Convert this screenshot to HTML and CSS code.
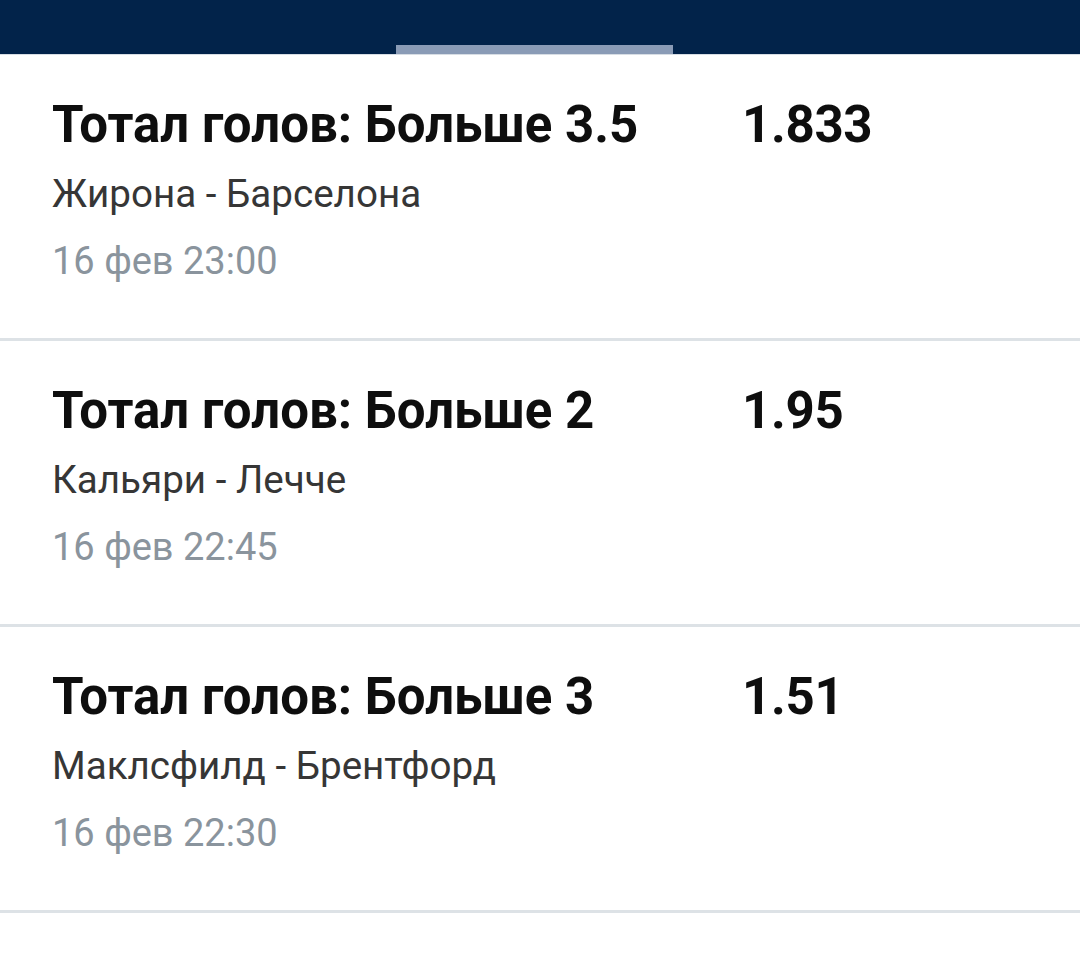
FILE: index.html
```html
<!DOCTYPE html>
<html lang="ru">
<head>
<meta charset="utf-8">
<link rel="stylesheet" href="styles.css">
</head>
<body>
<header class="topbar">
  <div class="tab-indicator"></div>
</header>
<main class="list">
  <div class="bet">
    <div class="bet-main">
      <div class="bet-title">Тотал голов: Больше 3.5</div>
      <div class="bet-match">Жирона - Барселона</div>
      <div class="bet-date">16 фев 23:00</div>
    </div>
    <div class="bet-odds">1.833</div>
  </div>
  <div class="bet">
    <div class="bet-main">
      <div class="bet-title">Тотал голов: Больше 2</div>
      <div class="bet-match">Кальяри - Лечче</div>
      <div class="bet-date">16 фев 22:45</div>
    </div>
    <div class="bet-odds">1.95</div>
  </div>
  <div class="bet">
    <div class="bet-main">
      <div class="bet-title">Тотал голов: Больше 3</div>
      <div class="bet-match">Маклсфилд - Брентфорд</div>
      <div class="bet-date">16 фев 22:30</div>
    </div>
    <div class="bet-odds">1.51</div>
  </div>
</main>
</body>
</html>
```

FILE: styles.css
```css
html, body {
  margin: 0;
  padding: 0;
  background: #ffffff;
  font-family: Roboto, "Noto Sans", sans-serif;
}

.topbar {
  height: 54px;
  background: #02234a;
  display: flex;
  align-items: flex-end;
  padding-left: 396px;
  border-bottom: 1px solid #d7dde4;
}

.tab-indicator {
  width: 277px;
  height: 9px;
  background: #8a9bb6;
}

.list {
  display: flex;
  flex-direction: column;
}

.bet {
  display: flex;
  padding: 40px 0 55px 52px;
  border-bottom: 3px solid #dde2e6;
}

.bet-main {
  width: 690px;
}

.bet-title,
.bet-odds {
  font-size: 51px;
  line-height: 60px;
  font-weight: 700;
  color: #0e0e0e;
}

.bet-odds {
  letter-spacing: -0.3px;
}

.bet-match {
  margin-top: 17px;
  font-size: 38.6px;
  line-height: 44px;
  color: #363636;
}

.bet-date {
  margin-top: 23px;
  font-size: 38px;
  line-height: 44px;
  color: #8a949d;
}
```
